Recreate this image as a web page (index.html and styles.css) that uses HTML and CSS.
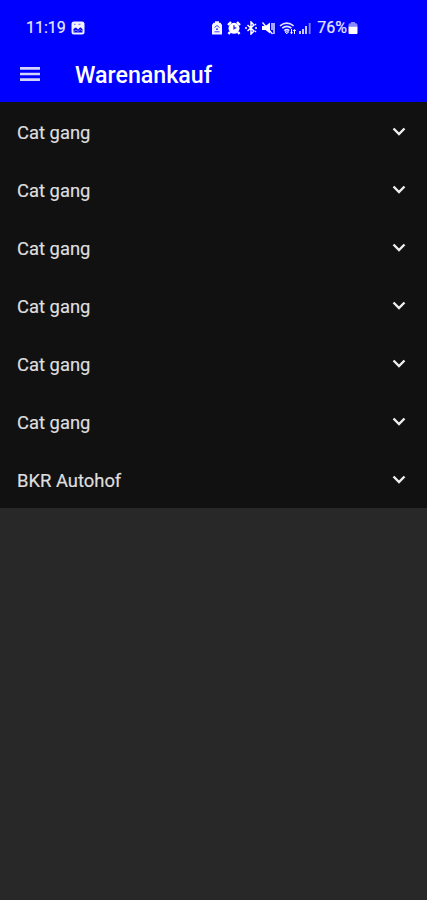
FILE: index.html
```html
<!DOCTYPE html>
<html lang="de">
<head>
<meta charset="utf-8">
<title>Warenankauf</title>
<link rel="stylesheet" href="styles.css">
</head>
<body>
<header class="header">
  <div class="status">
    <div class="status-left">
      <span class="time">11:19</span>
      <svg class="photo" width="14" height="14" viewBox="0 0 14 14"><rect x=".5" y=".5" width="13" height="13" rx="2.5" fill="#f0f0ff"/><path d="M2.500 7.800 5 6.500l2 2L9.300 6.300 11.500 8v3.500h-9z" fill="#00f"/><path d="M2.500 11 5 9l2 1.500 2.300-2 2.200 2" fill="none" stroke="#aaf" stroke-width=".7"/><path d="M3 3.300h1.500M7.500 3.300h2" stroke="#66f" stroke-width="1"/></svg>
    </div>
    <div class="status-right">
      <svg class="saver" width="12" height="14" viewBox="0 0 12 14"><path d="M4 .3h4v1.400h1.500L11 4v9.500H1V4l1.500-2.300H4z" fill="#f4f4ff"/><path d="M3.500 6.500 6 4.500l2.500 2M3.500 10.800h5" fill="none" stroke="#44f" stroke-width="1"/><circle cx="6" cy="8.200" r=".9" fill="#22f"/></svg>
      <svg width="14" height="14" viewBox="0 0 14 14"><path d="m1 4 3-3M13 4l-3-3M3 11l-1.500 2M11 11l1.500 2" stroke="#fff" stroke-width="2.400"/><circle cx="7" cy="7.300" r="5.500" fill="#fff"/><path d="M7 4.300v3.400l2.300-1.200" fill="none" stroke="#22f" stroke-width="1.300"/></svg>
      <svg width="14" height="14" viewBox="0 0 14 14"><path d="m3.500 4 6.500 6-3 3V1l3 3-6.500 6M1 7h2m8 0h2M11 3.500h1.200M11 10.500h1.200" fill="none" stroke="#fff" stroke-width="1.500"/></svg>
      <svg width="14" height="14" viewBox="0 0 14 14"><path d="M1 5h3.500L9 1.500v11L4.500 9H1z" fill="#fff"/><path d="m1.500 1.500 10 11.500M11 2v7M13 2v11" stroke="#fff" stroke-width="1.300"/></svg>
      <svg class="wifi" width="18" height="14" viewBox="0 0 18 14"><path d="M1 4.800q6.800-5.300 13.600 0M3.200 7.200q4.600-3.800 9.200 0M5.300 9.600q2.500-2.100 5 0" fill="none" stroke="#e4e4ff" stroke-width="1.600"/><path d="m6 10.800 1.800 2 1.800-2zM12.500 8v5m-1.200-1.600 1.200 1.300 1.200-1.300M15.500 13V8.500m-1.300 1.500 1.300-1.300L16.800 10" fill="none" stroke="#fff" stroke-width="1"/></svg>
      <svg class="signal" width="14" height="14" viewBox="0 0 14 14"><path d="M2 10v3M5 8v5M8 5v8" stroke="#c8c8ff" stroke-width="2"/><path d="M11.700 2v11" stroke="#8080ff" stroke-width="1.800"/></svg>
      <span class="percent">76%</span>
      <svg width="10" height="14" viewBox="0 0 10 14"><path d="M3 1h4v1.300h1Q9.500 2.300 9.500 4v1.500h-9V4q0-1.700 1.500-1.700h1z" fill="#8888ff"/><path d="M.5 5.500h9V12q0 1-1 1h-7q-1 0-1-1z" fill="#fff"/></svg>
    </div>
  </div>
  <div class="toolbar">
    <svg width="20" height="14" viewBox="0 0 20 14"><path d="M0 1.400h20M0 7h20M0 12.600h20" stroke="#d4d4ff" stroke-width="2.700"/></svg>
    <h1 class="title">Warenankauf</h1>
  </div>
</header>
<main class="list">
  <div class="row"><span>Cat gang</span><svg class="chevron" viewBox="0 0 14 9"><path d="m1.500 1.500 5.500 5.500 5.500-5.500"/></svg></div>
  <div class="row"><span>Cat gang</span><svg class="chevron" viewBox="0 0 14 9"><path d="m1.500 1.500 5.500 5.500 5.500-5.500"/></svg></div>
  <div class="row"><span>Cat gang</span><svg class="chevron" viewBox="0 0 14 9"><path d="m1.500 1.500 5.500 5.500 5.500-5.500"/></svg></div>
  <div class="row"><span>Cat gang</span><svg class="chevron" viewBox="0 0 14 9"><path d="m1.500 1.500 5.500 5.500 5.500-5.500"/></svg></div>
  <div class="row"><span>Cat gang</span><svg class="chevron" viewBox="0 0 14 9"><path d="m1.500 1.500 5.500 5.500 5.500-5.500"/></svg></div>
  <div class="row"><span>Cat gang</span><svg class="chevron" viewBox="0 0 14 9"><path d="m1.500 1.500 5.500 5.500 5.500-5.500"/></svg></div>
  <div class="row"><span>BKR Autohof</span><svg class="chevron" viewBox="0 0 14 9"><path d="m1.500 1.500 5.500 5.500 5.500-5.500"/></svg></div>
</main>
</body>
</html>
```
FILE: styles.css
```css
* { box-sizing: border-box; }
body {
  margin: 0;
  min-height: 900px;
  background: #282828;
  font-family: Roboto, sans-serif;
  color: #fff;
}
svg { display: block; flex: none; }
.header {
  height: 102px;
  background: #00f;
}
.status {
  display: flex;
  justify-content: space-between;
  height: 47px;
  padding: 8px 69px 0 26px;
  font-size: 16px;
  line-height: 39px;
  color: #e8e8ff;
  -webkit-text-stroke: .2px #e8e8ff;
}
.status-left, .status-right {
  display: flex;
  align-items: center;
  height: 39px;
}
.status-left { gap: 5px; }
.status-right { gap: 3px; }
.saver { margin-right: 1px; }
.wifi { margin-left: 1px; }
.signal { margin-left: -2px; }
.percent { margin: 0 -2px 0 2px; }
.toolbar {
  display: flex;
  align-items: center;
  gap: 35px;
  height: 54px;
  padding-left: 20px;
}
.title {
  margin: 0;
  padding-top: 2px;
  font-size: 23.200px;
  font-weight: 500;
  line-height: 30px;
}
.list { background: #111; }
.row {
  display: flex;
  align-items: center;
  justify-content: space-between;
  height: 58px;
  padding: 3px 21px 0 17px;
  font-size: 18.400px;
  color: #dedede;
  -webkit-text-stroke: .2px #dedede;
}
.chevron {
  width: 14px;
  height: 9px;
  margin-bottom: 3px;
  fill: none;
  stroke: #eee;
  stroke-width: 2.400;
}
```
